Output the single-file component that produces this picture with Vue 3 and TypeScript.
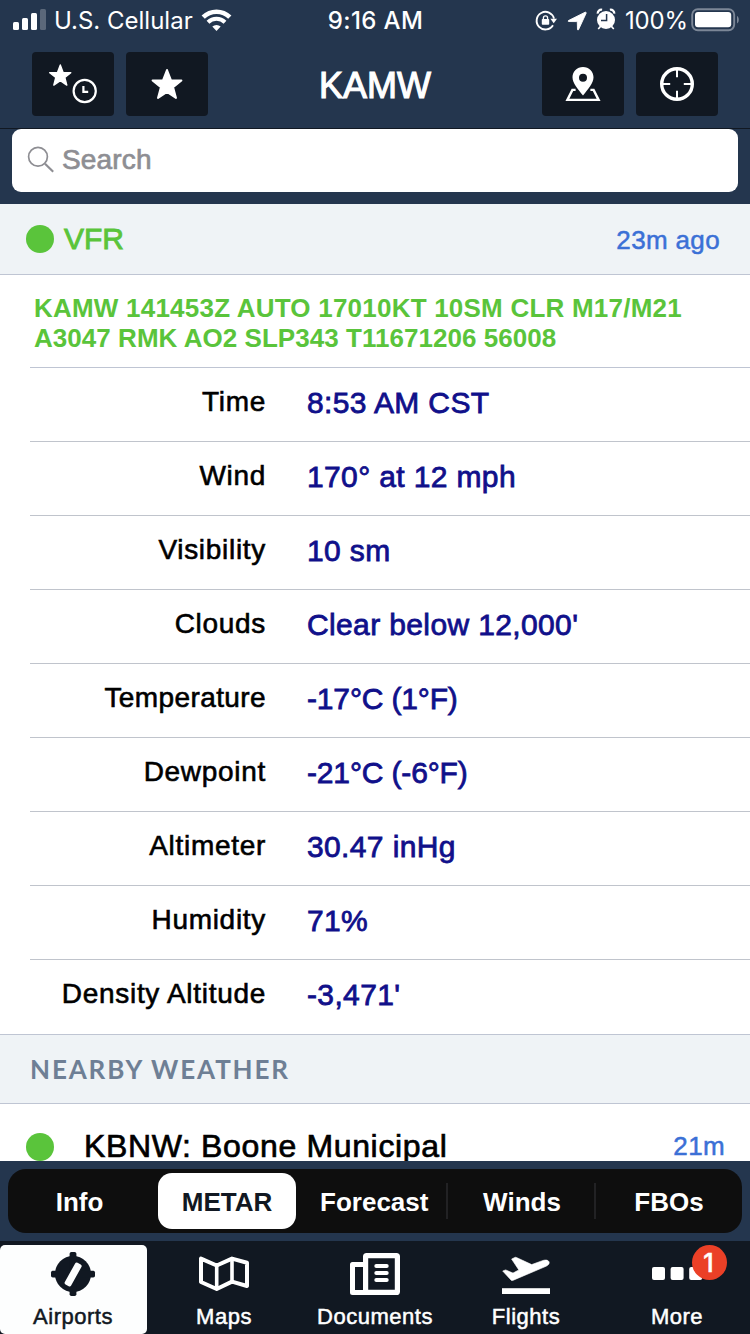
<script setup lang="ts">
interface Row {
  label: string
  value: string
  tight?: boolean
}

const rows: Row[] = [
  { label: 'Time', value: '8:53 AM CST' },
  { label: 'Wind', value: '170° at 12 mph' },
  { label: 'Visibility', value: '10 sm' },
  { label: 'Clouds', value: "Clear below 12,000'" },
  { label: 'Temperature', value: '-17°C (1°F)', tight: true },
  { label: 'Dewpoint', value: '-21°C (-6°F)', tight: true },
  { label: 'Altimeter', value: '30.47 inHg' },
  { label: 'Humidity', value: '71%' },
  { label: 'Density Altitude', value: "-3,471'" },
]

const segments: string[] = ['Info', 'METAR', 'Forecast', 'Winds', 'FBOs']
const activeSegment = 'METAR'
const tabs: string[] = ['Airports', 'Maps', 'Documents', 'Flights', 'More']
const activeTab = 'Airports'
</script>

<template>
  <div class="screen">
    <header class="top">
      <div class="status">
        <div class="status-left">
          <svg class="signal" viewBox="13 8 34 24" width="34" height="24">
            <rect x="13" y="22" width="6" height="8" rx="1.5" fill="#fff" />
            <rect x="22" y="18" width="6" height="12" rx="1.5" fill="#fff" />
            <rect x="31" y="13" width="6" height="17" rx="1.5" fill="#fff" />
            <rect x="40" y="9" width="6" height="21" rx="1.5" fill="#fff" opacity="0.25" />
          </svg>
          <span class="carrier">U.S. Cellular</span>
          <svg class="wifi" viewBox="201 8 32 24" width="32" height="24">
            <path d="M203.2 17.2a19 19 0 0 1 26.6 0" fill="none" stroke="#fff" stroke-width="4.6" />
            <path d="M208 22.2a12.2 12.2 0 0 1 17 0" fill="none" stroke="#fff" stroke-width="4" />
            <path d="M212.3 26.6a6 6 0 0 1 8.4 0l-4.2 4.4z" fill="#fff" />
          </svg>
        </div>
        <span class="clock">9:16 AM</span>
        <div class="status-right">
          <svg class="sysicons" viewBox="534 6 84 26" width="84" height="26">
            <path d="M553 25.200a8.800 8.800 0 1 1 1-6.600" fill="none" stroke="#fff" stroke-width="1.900" />
            <path d="M550.400 18.800h6.600l-3.300 4.400z" fill="#fff" />
            <rect x="541.800" y="19" width="7.400" height="5.800" rx="0.8" fill="#fff" />
            <path d="M543.400 19.5v-1.6a2.1 2.1 0 0 1 4.2 0v1.6" fill="none" stroke="#fff" stroke-width="1.300" />
            <path d="M585.200 12.2 568.400 20.6q-.8.6.2.9l8.200.1q.5 0 .5.5l.2 7.400q.3 1 1 .2l7.700-16.600q.2-1-1-.9z" fill="#fff" stroke="#fff" stroke-width="0.900" />
            <circle cx="606" cy="20" r="9" fill="#fff" />
            <path d="M597.700 13.600a3.600 3.600 0 0 1 4.400-3.800M614.300 13.600a3.600 3.600 0 0 0-4.400-3.800" fill="none" stroke="#fff" stroke-width="2.200" />
            <path d="m600.400 26.600-2.200 2.400M611.600 26.600l2.200 2.400" stroke="#fff" stroke-width="1.600" />
            <path d="M606.600 14v6.600H601" fill="none" stroke="#24364e" stroke-width="1.500" />
          </svg>
          <span class="pct">100%</span>
          <svg class="battery" viewBox="690 7 50 26" width="50" height="26">
            <rect x="692.2" y="9.2" width="42" height="21" rx="5.6" fill="none" stroke="#7c8797" stroke-width="1.9" />
            <rect x="695" y="12" width="36.2" height="15.3" rx="3" fill="#fff" />
            <path d="M737 16c2.4 1 2.4 6.4 0 7.4z" fill="#7c8797" />
          </svg>
        </div>
      </div>

      <div class="nav">
        <button class="btn">
          <svg viewBox="32 52 82 64" width="82" height="64">
            <path d="m60.300 65 2.800 7.400 7.700.2-6 4.900 2 7.600-6.500-4.500-6.500 4.500 2-7.600-6.100-4.900 7.800-.2z" fill="#fff" stroke="#fff" stroke-width="1.400" stroke-linejoin="round" />
            <circle cx="84.700" cy="91" r="11.100" fill="none" stroke="#fff" stroke-width="2.200" />
            <path d="M83.400 86v5.900h4.800" fill="none" stroke="#fff" stroke-width="2.200" />
          </svg>
        </button>
        <button class="btn">
          <svg viewBox="126 52 82 64" width="82" height="64">
            <path d="m167 70 3.900 10.200 10.500.3-8.300 6.700 2.900 10.700-9-6.100-9 6.100 2.900-10.700-8.300-6.700 10.500-.3z" fill="#fff" stroke="#fff" stroke-width="2" stroke-linejoin="round" />
          </svg>
        </button>
        <h1 class="title">KAMW</h1>
        <button class="btn">
          <svg viewBox="542 52 82 64" width="82" height="64">
            <path fill-rule="evenodd" d="M583 67c6 0 10.500 4.500 10.500 10.300 0 6.200-5.500 12-10.500 18.200-5-6.200-10.500-12-10.500-18.200C572.500 71.500 577 67 583 67zm0 6.700a4 4 0 1 0 0 8 4 4 0 0 0 0-8z" fill="#fff" />
            <path d="M575.600 89.900h-3.200l-5 10h31.200l-5-10H590.400" fill="none" stroke="#fff" stroke-width="2.400" />
          </svg>
        </button>
        <button class="btn">
          <svg viewBox="636 52 82 64" width="82" height="64">
            <circle cx="677" cy="84" r="15.300" fill="none" stroke="#fff" stroke-width="3.400" />
            <path d="M677 69v8.200M677 90.800V99M662 84h8.200M683.800 84h8.200" stroke="#fff" stroke-width="2" />
          </svg>
        </button>
      </div>

      <div class="search">
        <svg viewBox="26 145 30 30" width="30" height="30">
          <circle cx="38" cy="156.800" r="9.400" fill="none" stroke="#8e8e93" stroke-width="1.700" />
          <path d="m45 163.800 8.200 8" stroke="#8e8e93" stroke-width="2.200" />
        </svg>
        <span class="placeholder">Search</span>
      </div>
    </header>

    <main class="content">
      <section class="band vfr">
        <i class="dot"></i>
        <span class="vfr-text">VFR</span>
        <span class="ago">23m ago</span>
      </section>
      <p class="raw"><span class="line">KAMW 141453Z AUTO 17010KT 10SM CLR M17/M21</span><span class="line second">A3047 RMK AO2 SLP343 T11671206 56008</span></p>
      <dl class="rows">
        <div v-for="r in rows" :key="r.label" class="row">
          <dt :class="{ snug: r.label === 'Temperature' }">{{ r.label }}</dt>
          <dd :class="{ tight: r.tight }">{{ r.value }}</dd>
        </div>
      </dl>
      <section class="band nearby">NEARBY WEATHER</section>
      <div class="station">
        <i class="dot"></i>
        <span class="name">KBNW: Boone Municipal</span>
        <span class="age">21m</span>
      </div>
    </main>

    <div class="segwrap">
      <div class="segbar">
        <div v-for="s in segments" :key="s" class="seg" :class="{ on: s === activeSegment }">
          <span>{{ s }}</span>
        </div>
      </div>
    </div>

    <nav class="tabs">
      <div v-for="t in tabs" :key="t" class="tab" :class="{ on: t === activeTab }">
        <svg v-if="t === 'Airports'" viewBox="43 1250 60 48" width="60" height="48">
          <circle cx="73" cy="1274" r="18" fill="#111822" />
          <rect x="69.600" y="1252" width="6.800" height="44" rx="1.800" fill="#111822" />
          <rect x="51" y="1270.800" width="44" height="6.800" rx="1.800" fill="#111822" />
          <rect x="69.600" y="1262" width="7.200" height="24.800" rx="1.800" fill="#fdfefe" transform="rotate(29 73 1274.300)" />
        </svg>
        <svg v-else-if="t === 'Maps'" viewBox="194 1250 60 48" width="60" height="48">
          <path d="M216.700 1265.500v23.500M232 1258.600v22.800" fill="none" stroke="#fff" stroke-width="3.600" />
          <path d="M201 1258.600v23.400l15.700 7 15.300-7.400 15 4.400v-23.200l-15-4.200-15.300 6.900z" fill="none" stroke="#fff" stroke-width="4" stroke-linejoin="round" />
        </svg>
        <svg v-else-if="t === 'Documents'" viewBox="345 1250 60 48" width="60" height="48">
          <path d="M366 1264.500h-13.500v28H366" fill="none" stroke="#fff" stroke-width="5" stroke-linejoin="round" />
          <rect x="365.600" y="1255.600" width="31.800" height="36.800" rx="1" fill="none" stroke="#fff" stroke-width="5.200" />
          <path d="M376.300 1266h10.400M376.300 1273h10.400M376.300 1280h10.400" stroke="#fff" stroke-width="4" stroke-linecap="round" />
        </svg>
        <svg v-else-if="t === 'Flights'" viewBox="496 1250 60 48" width="60" height="48">
          <path d="m502.700 1271 3-1.100 7.300 3.200 5.800-3.200-7.200-10.800 3.300-1.700q.8-.3 1.600.1l15.200 7.100 10-3.700c3.200-1.300 6.400-1.200 7.300.8.800 2-.7 3.500-3 4.600l-33.200 14.100c-.8.300-1.400.2-1.900-.5z" fill="#fff" stroke="#fff" stroke-width="0.600" stroke-linejoin="round" />
          <rect x="502" y="1288.200" width="48" height="5.800" fill="#fff" />
        </svg>
        <svg v-else viewBox="647 1250 60 48" width="60" height="48">
          <rect x="652" y="1267" width="13" height="13" rx="2" fill="#fff" />
          <rect x="670.600" y="1267" width="13" height="13" rx="2" fill="#fff" />
          <rect x="689.200" y="1267" width="13" height="13" rx="2" fill="#fff" />
        </svg>
        <span class="tab-label">{{ t }}</span>
        <b v-if="t === 'More'" class="badge">1</b>
      </div>
    </nav>
  </div>
</template>

<style>
html,
body {
  margin: 0;
  overflow: hidden;
}
</style>

<style scoped>
.screen {
  width: 750px;
  height: 1334px;
  display: flex;
  flex-direction: column;
  overflow: hidden;
  background: #fff;
  font-family: "Liberation Sans", Arial, sans-serif;
  color: #000;
}
svg {
  display: block;
  flex: none;
}
.top {
  height: 204px;
  flex: none;
  background: #24364e;
}
.status {
  height: 40px;
  display: grid;
  grid-template-columns: 300px 150px 300px;
  color: #fff;
  font-family: Inter, "Liberation Sans", sans-serif;
  font-size: 24px;
  line-height: 42px;
  white-space: nowrap;
}
.status-left {
  display: flex;
  padding-left: 13px;
}
.status-left svg {
  margin-top: 8px;
}
.carrier {
  width: 147px;
  margin-left: 7px;
}
.clock {
  padding-left: 1px;
  text-align: center;
  font-weight: 500;
  letter-spacing: 0.4px;
}
.status-right {
  display: flex;
  padding-left: 84px;
}
.sysicons {
  margin-top: 6px;
}
.pct {
  width: 65px;
  margin-left: 7px;
  letter-spacing: -0.2px;
}
.battery {
  margin-top: 7px;
}
.nav {
  height: 76px;
  padding: 12px 32px 0;
  display: flex;
  gap: 12px;
  border-bottom: 1px solid #111822;
  box-sizing: content-box;
}
.btn {
  width: 82px;
  height: 64px;
  padding: 0;
  border: 0;
  border-radius: 4px;
  background: #111822;
}
.title {
  flex: 1;
  margin: 0;
  text-align: center;
  font-size: 36px;
  font-weight: 400;
  line-height: 67px;
  color: #fff;
  -webkit-text-stroke: 1.1px #fff;
}
.search {
  height: 63px;
  margin: 0 12px;
  padding-left: 14px;
  display: flex;
  align-items: flex-start;
  border-radius: 9px;
  background: #fff;
}
.search svg {
  margin-top: 16px;
}
.placeholder {
  margin-left: 6px;
  font-size: 28px;
  line-height: 61px;
  letter-spacing: 0.15px;
  color: #8e8e93;
  -webkit-text-stroke: 0.7px #8e8e93;
}
.content {
  height: 957px;
  flex: none;
  overflow: hidden;
}
.band {
  background: #eff3f6;
  border-bottom: 1px solid #bfc5d3;
}
.vfr {
  height: 70px;
  padding: 0 30px 0 26px;
  display: flex;
  align-items: center;
}
.dot {
  width: 28px;
  height: 28px;
  flex: none;
  border-radius: 50%;
  background: #5ac43b;
}
.vfr-text {
  margin-left: 10px;
  font-size: 30px;
  line-height: 70px;
  color: #5ac43b;
  -webkit-text-stroke: 0.9px #5ac43b;
}
.ago,
.age {
  margin-left: auto;
  font-size: 26px;
  letter-spacing: 0.35px;
  color: #3b70d6;
  -webkit-text-stroke: 0.5px #3b70d6;
}
.ago {
  padding-top: 2px;
  line-height: 70px;
}
.age {
  line-height: 82px;
  padding-bottom: 2px;
}
.raw {
  height: 74px;
  margin: 0 0 0 30px;
  padding: 18px 0 0 4px;
  border-bottom: 1px solid #bfc5d3;
  font-size: 26px;
  font-weight: 700;
  line-height: 30px;
  letter-spacing: 0.22px;
  color: #5ac43b;
  white-space: nowrap;
}
.line {
  display: block;
}
.second {
  letter-spacing: 0.04px;
}
.rows {
  margin: 0;
}
.row {
  height: 73px;
  margin-left: 30px;
  display: flex;
  gap: 41px;
  border-bottom: 1px solid #c0c4cc;
  white-space: nowrap;
}
.row:last-child {
  height: 74px;
  margin-left: 0;
  padding-left: 30px;
  border-color: #bfc5d3;
}
dt {
  width: 236px;
  text-align: right;
  font-size: 28px;
  line-height: 67px;
  letter-spacing: 0.7px;
  -webkit-text-stroke: 0.6px #000;
}
dt.snug {
  letter-spacing: 0.4px;
}
dd {
  margin: 0;
  font-size: 30px;
  line-height: 69px;
  letter-spacing: 0.37px;
  color: #10108a;
  -webkit-text-stroke: 0.8px #10108a;
}
dd.tight {
  letter-spacing: -0.15px;
}
.nearby {
  height: 68px;
  padding-left: 30px;
  font-family: Lato, "Liberation Sans", sans-serif;
  font-size: 26px;
  font-weight: 700;
  line-height: 69px;
  letter-spacing: 1.85px;
  color: #6e7f95;
}
.station {
  height: 86px;
  padding: 0 25px 0 26px;
  display: flex;
  align-items: center;
  white-space: nowrap;
}
.name {
  margin-left: 30px;
  padding-bottom: 2px;
  font-size: 32px;
  line-height: 82px;
  letter-spacing: 0.65px;
  -webkit-text-stroke: 0.7px #000;
}
.segwrap {
  height: 64px;
  padding: 8px;
  flex: none;
  background: #24364e;
}
.segbar {
  height: 64px;
  display: grid;
  grid-template-columns: 145px 147.5px 147.5px 148px 146px;
  align-items: center;
  border-radius: 18px;
  background: #0e0e0e;
}
.seg {
  height: 36px;
  display: flex;
  align-items: center;
  justify-content: center;
  font-size: 26px;
  font-weight: 700;
  color: #fff;
}
.seg span {
  padding-top: 2px;
}
.seg:first-child {
  padding-right: 2px;
}
.seg:nth-child(4),
.seg:nth-child(5) {
  box-shadow: -2px 0 0 #222224;
}
.seg.on {
  height: 56px;
  margin: 0 4.5px 0 5px;
  border-radius: 14px;
  background: #fff;
  color: #111822;
}
.tabs {
  height: 93px;
  flex: none;
  display: grid;
  grid-template-columns: repeat(5, 147px);
  column-gap: 4px;
  background: #111822;
}
.tab {
  position: relative;
  height: 89px;
  margin-top: 4px;
  padding: 5px 1px 0 0;
  box-sizing: border-box;
  display: flex;
  flex-direction: column;
  align-items: center;
  border-radius: 5px;
  color: #fff;
}
.tab.on {
  background: #fdfefe;
  color: #111822;
}
.tab-label {
  margin-top: 4px;
  font-size: 22px;
  line-height: 30px;
  letter-spacing: 0.5px;
  -webkit-text-stroke: 0.5px currentColor;
}
.badge {
  position: absolute;
  left: 88px;
  top: 0;
  width: 35px;
  height: 35px;
  border-radius: 50%;
  background: #eb4027;
  text-align: center;
  font: 500 25px/36px Inter, sans-serif;
  text-indent: -2px;
  -webkit-text-stroke: 0.5px #fff;
}
</style>
